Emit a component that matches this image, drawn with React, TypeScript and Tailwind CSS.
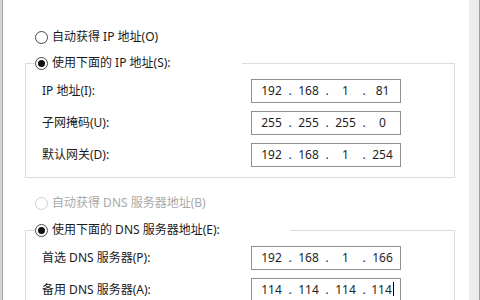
import React from 'react';

const FONT = { fontFamily: '"Noto Sans", "Noto Sans CJK SC", sans-serif' };

interface RadioProps {
  label: string;
  checked?: boolean;
  disabled?: boolean;
}

function Radio({ label, checked = false, disabled = false }: RadioProps) {
  return (
    <div className="flex h-4 items-center gap-[4px]">
      <span
        className={`flex h-[13px] w-[13px] shrink-0 items-center justify-center rounded-full border-[1.5px] bg-white ${
          disabled ? 'border-[#cfcfcf]' : 'border-[#4a4a4a]'
        }`}
      >
        {checked && <span className="h-[7px] w-[7px] rounded-full bg-[#111]" />}
      </span>
      <span className={`whitespace-nowrap text-[12px] leading-4 ${disabled ? 'text-[#a9a9a9]' : 'text-[#1a1a1a]'}`}>
        {label}
      </span>
    </div>
  );
}

interface IpRowProps {
  label: string;
  parts: string[];
  caret?: boolean;
}

function IpRow({ label, parts, caret = false }: IpRowProps) {
  return (
    <div className="flex h-6 items-center">
      <span className="w-[209px] shrink-0 text-[12px] leading-4 text-[#1a1a1a]">{label}</span>
      <div className="flex h-6 w-[150px] shrink-0 items-center border border-[#8f8f8f] bg-white pl-[3px] text-[12px] leading-4 text-[#1f1f1f]">
        {parts.map((p, i) => (
          <React.Fragment key={i}>
            {i > 0 && <span className="w-[4px] text-center">.</span>}
            <span className="flex w-[33px] justify-center">
              {p}
              {caret && i === parts.length - 1 && (
                <span className="ml-[1px] h-[14px] w-[1px] bg-black" />
              )}
            </span>
          </React.Fragment>
        ))}
      </div>
    </div>
  );
}

export default function App() {
  return (
    <div className="flex h-[300px] w-[480px] overflow-hidden bg-white" style={FONT}>
      {/* left window edge */}
      <div className="w-[3px] shrink-0 border-r border-[#a3a3a3] bg-[#d6d6d6]" />

      <div className="flex flex-1 flex-col pl-[22px] pt-[29px]">
        <div className="pl-[10px]">
          <Radio label="自动获得 IP 地址(O)" />
        </div>

        <fieldset className="mt-[10px] w-[430px] border border-[#dcdcdc] pb-[10px] pl-[9px]">
          <legend className="w-[207px]">
            <Radio label="使用下面的 IP 地址(S):" checked />
          </legend>
          <div className="flex flex-col gap-2 pl-[7px] pt-2">
            <IpRow label="IP 地址(I):" parts={['192', '168', '1', '81']} />
            <IpRow label="子网掩码(U):" parts={['255', '255', '255', '0']} />
            <IpRow label="默认网关(D):" parts={['192', '168', '1', '254']} />
          </div>
        </fieldset>

        <div className="mt-[17px] pl-[10px]">
          <Radio label="自动获得 DNS 服务器地址(B)" disabled />
        </div>

        <fieldset className="mt-[11px] w-[430px] border border-[#dcdcdc] pb-[10px] pl-[9px]">
          <legend className="w-[255px]">
            <Radio label="使用下面的 DNS 服务器地址(E):" checked />
          </legend>
          <div className="flex flex-col gap-2 pl-[7px] pt-2">
            <IpRow label="首选 DNS 服务器(P):" parts={['192', '168', '1', '166']} />
            <IpRow label="备用 DNS 服务器(A):" parts={['114', '114', '114', '114']} caret />
          </div>
        </fieldset>
      </div>

      {/* right window edge */}
      <div className="w-[11px] shrink-0 border-r border-[#a0a0a0] bg-[#ececec]" />
    </div>
  );
}
